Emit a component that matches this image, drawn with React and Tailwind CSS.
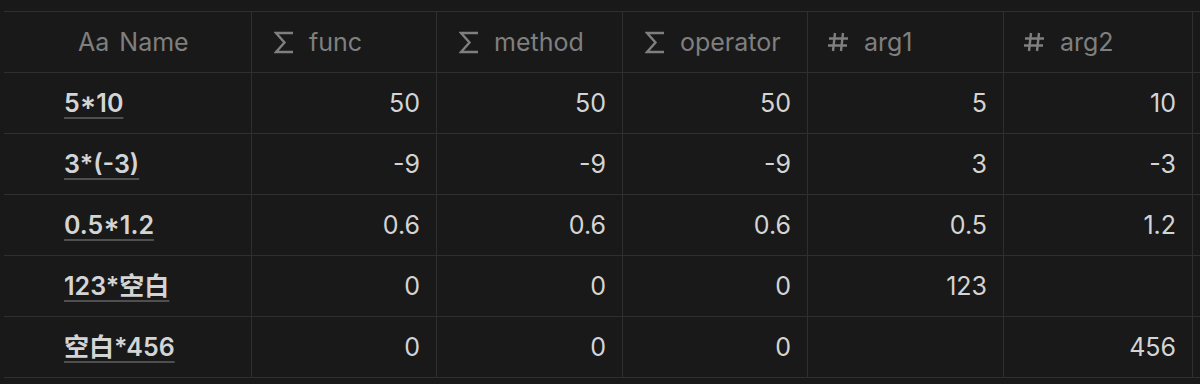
const widths = ['w-[248px]', 'w-[185px]', 'w-[186px]', 'w-[185px]', 'w-[196px]', 'w-[189px]'];

const rows = [
  ['5*10', '50', '50', '50', '5', '10'],
  ['3*(-3)', '-9', '-9', '-9', '3', '-3'],
  ['0.5*1.2', '0.6', '0.6', '0.6', '0.5', '1.2'],
  ['123*空白', '0', '0', '0', '123', ''],
  ['空白*456', '0', '0', '0', '', '456'],
];

function SigmaIcon() {
  return (
    <svg width="20" height="23" viewBox="0 0 20 23" fill="none" stroke="#7f7f7f" strokeWidth="2.4" strokeLinejoin="miter">
      <path d="M19 2H2l8.5 9.5L2 21h17" />
    </svg>
  );
}

function HashIcon() {
  return (
    <svg width="22" height="22" viewBox="0 0 22 22" fill="none" stroke="#7f7f7f" strokeWidth="2.4" strokeLinecap="butt">
      <path d="M8 2L6 20M16 2l-2 18M2 7.5h19M1 14.5h19" />
    </svg>
  );
}

function HeaderCell({ w, icon, label, pad }) {
  return (
    <div className={`${w} ${pad} h-[60px] flex items-center gap-[15px] border-r border-[#2f2f2f] shrink-0 text-[#7f7f7f]`}>
      {icon}
      <span>{label}</span>
    </div>
  );
}

export default function App() {
  return (
    <div className="w-[1200px] h-[384px] bg-[#191919] overflow-hidden pt-[11px] pl-[4px] font-['Inter','Noto_Sans_CJK_SC',sans-serif] text-[25px] leading-none">
      <div className="border-t border-[#2f2f2f]">
        {/* header */}
        <div className="flex border-b border-[#2f2f2f]">
          <div className="w-[248px] h-[60px] pl-[74px] flex items-center gap-[10px] border-r border-[#2f2f2f] shrink-0 text-[#7f7f7f]">
            <span>Aa</span>
            <span>Name</span>
          </div>
          <HeaderCell w={widths[1]} pad="pl-[22px]" icon={<SigmaIcon />} label="func" />
          <HeaderCell w={widths[2]} pad="pl-[22px]" icon={<SigmaIcon />} label="method" />
          <HeaderCell w={widths[3]} pad="pl-[22px]" icon={<SigmaIcon />} label="operator" />
          <HeaderCell w={widths[4]} pad="pl-[19px]" icon={<HashIcon />} label="arg1" />
          <HeaderCell w={widths[5]} pad="pl-[19px]" icon={<HashIcon />} label="arg2" />
          <div className="flex-1" />
        </div>

        {rows.map((row, i) => (
          <div key={i} className="flex border-b border-[#2f2f2f]">
            <div className="w-[248px] h-[60px] pl-[60px] flex items-center border-r border-[#2f2f2f] shrink-0">
              <span className="font-semibold text-[#d4d4d4] underline decoration-[#4f4f4f] decoration-[1.5px] underline-offset-[5px]">
                {row[0]}
              </span>
            </div>
            {row.slice(1).map((v, j) => (
              <div
                key={j}
                className={`${widths[j + 1]} h-[60px] pr-[16px] flex items-center justify-end border-r border-[#2f2f2f] shrink-0 text-[#d4d4d4]`}
              >
                {v}
              </div>
            ))}
            <div className="flex-1" />
          </div>
        ))}
      </div>
    </div>
  );
}
